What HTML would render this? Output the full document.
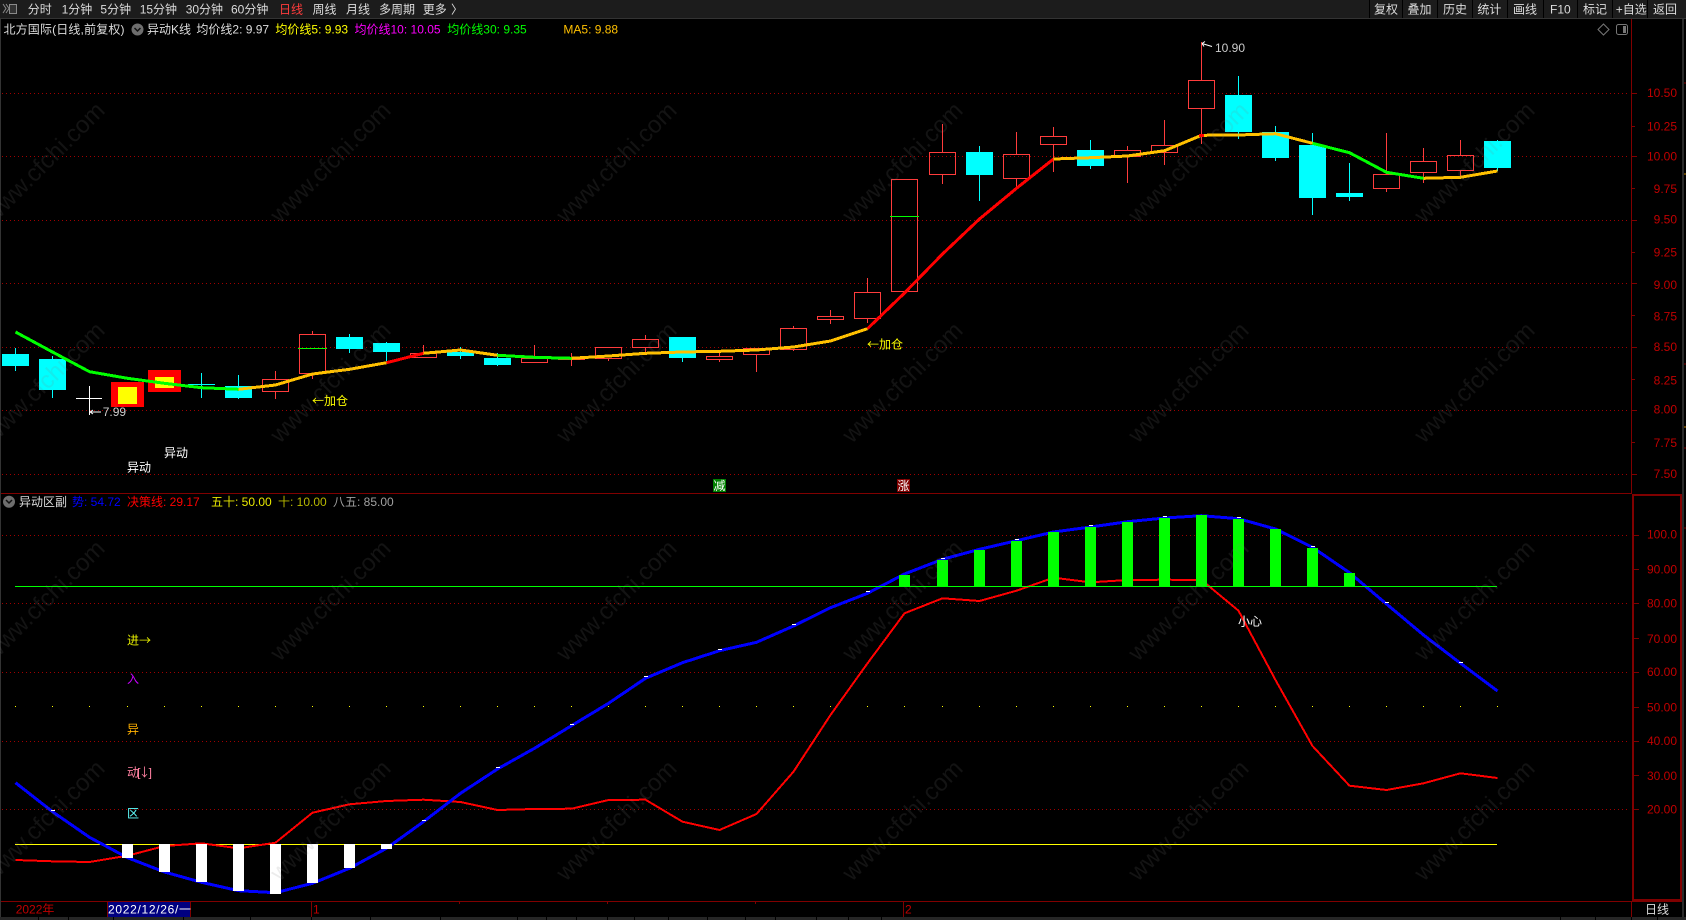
<!DOCTYPE html>
<html lang="zh">
<head>
<meta charset="utf-8">
<title>北方国际</title>
<style>
html,body{margin:0;padding:0;background:#000;width:1686px;height:920px;overflow:hidden}
svg{display:block;position:absolute;left:0;top:0}
text{font-family:"Liberation Sans","Noto Sans CJK SC",sans-serif;font-size:12px;white-space:pre}
.c{shape-rendering:crispEdges}
.t text{fill:#dcdcdc}
.a text{fill:#c00000;text-anchor:end}
.w text{fill:rgba(128,128,128,.15);font-size:24px;text-anchor:middle}
.k{font-family:"Noto Sans CJK SC",sans-serif}
</style>
</head>
<body>
<svg width="1686" height="920" viewBox="0 0 1686 920" xmlns="http://www.w3.org/2000/svg">
<rect width="1686" height="920" fill="#000"/>
<g class="c">
<!-- toolbar -->
<rect width="1686" height="18" fill="#1c1c1c"/>
<rect y="18" width="1686" height="1" fill="#333"/>
<path d="M1369.5 0V18M1402.5 0V18M1437.5 0V18M1472.5 0V18M1507.5 0V18M1543.5 0V18M1577.5 0V18M1612.5 0V18M1647.5 0V18" stroke="#000" fill="none"/>
<!-- borders -->
<rect x="0" y="19" width="1" height="898" fill="#333"/>
<rect x="1682" y="19" width="2" height="901" fill="#2a2a2a"/>
<path d="M1684 83h2M1684 364h2M1684 448h2M1684 528h2" stroke="#800000"/>
<path d="M1684 174h2M1684 427h2" stroke="#c08000"/>
<!-- dotted grid -->
<path d="M2 93.5H1628M2 156.5H1628M2 220.5H1628M2 283.5H1628M2 347.5H1628M2 410.5H1628M2 474.5H1628M2 535.5H1628M2 603.5H1628M2 672.5H1628M2 741.5H1628M2 809.5H1628" stroke="#a00000" stroke-dasharray="1 3" fill="none"/>
<!-- axis -->
<path d="M1631.5 19V494M1631.5 902V917M1 493.5H1632M1 901.5H1682" stroke="#800000" fill="none"/>
<rect x="1632" y="494" width="50" height="2" fill="#800000"/>
<rect x="1632" y="494" width="2" height="407" fill="#800000"/>
<rect x="1680" y="494" width="2" height="407" fill="#800000"/>
<rect x="1632" y="899" width="50" height="2" fill="#800000"/>
<path d="M1632 93.5h5M1632 126.5h3M1632 156.5h5M1632 188.5h3M1632 220.5h5M1632 252.5h3M1632 283.5h5M1632 315.5h3M1632 347.5h5M1632 379.5h3M1632 410.5h5M1632 442.5h3M1632 474.5h5M1634 535.5h5M1634 569.5h5M1634 603.5h5M1634 638.5h5M1634 672.5h5M1634 707.5h5M1634 741.5h5M1634 775.5h5M1634 809.5h5" stroke="#800000" fill="none"/>
<!-- hollow red candles -->
<g fill="none" stroke="#ff3c3c">
<rect x="262.5" y="379.5" width="26" height="12"/><rect x="299.5" y="334.5" width="26" height="39"/><rect x="410.5" y="353.5" width="26" height="4"/><rect x="521.5" y="358.5" width="26" height="4"/><rect x="558.5" y="357.5" width="26" height="2"/><rect x="595.5" y="347.5" width="26" height="11"/><rect x="632.5" y="339.5" width="26" height="8"/><rect x="706.5" y="356.5" width="26" height="3"/><rect x="743.5" y="348.5" width="26" height="6"/><rect x="780.5" y="328.5" width="26" height="21"/><rect x="817.5" y="316.5" width="26" height="3"/><rect x="854.5" y="292.5" width="26" height="26"/><rect x="891.5" y="179.5" width="26" height="112"/><rect x="929.5" y="152.5" width="26" height="22"/><rect x="1003.5" y="154.5" width="26" height="24"/><rect x="1040.5" y="136.5" width="26" height="8"/><rect x="1114.5" y="150.5" width="26" height="6"/><rect x="1151.5" y="145.5" width="26" height="7"/><rect x="1188.5" y="80.5" width="26" height="28"/><rect x="1373.5" y="174.5" width="26" height="14"/><rect x="1410.5" y="161.5" width="26" height="11"/><rect x="1447.5" y="155.5" width="26" height="15"/>
<path d="M275.5 371V379M275.5 392V399M312.5 331V334M312.5 374V379M423.5 345V353M534.5 345V358M571.5 353V357M571.5 360V366M608.5 359V361M645.5 335V339M645.5 348V352M719.5 352V356M719.5 360V362M756.5 355V372M793.5 326V328M793.5 350V351M830.5 310V316M830.5 320V324M867.5 278V292M867.5 319V323M942.5 124V152M942.5 175V184M1016.5 132V154M1016.5 179V189M1053.5 127V136M1053.5 145V172M1127.5 146V150M1127.5 157V183M1164.5 120V145M1164.5 153V165M1201.5 42V80M1201.5 109V144M1386.5 133V174M1386.5 189V192M1423.5 148V161M1423.5 173V183M1460.5 140V155M1460.5 171V176"/>
</g>
<path d="M298 348.5H327M890 216.5H919" stroke="#00ff00"/>
<!-- cyan candles -->
<path d="M15.5 348V371M52.5 356V398M201.5 373V398M188 384.5H215M238.5 375V399M349.5 334V353M386.5 342V361M460.5 347V359M497.5 353V366M682.5 337V362M979.5 146V201M1090.5 140V169M1238.5 76V139M1275.5 126V161M1312.5 133V215M1349.5 163V201M1497.5 140V171" stroke="#00ffff" fill="none"/>
<g fill="#00ffff">
<rect x="2" y="354" width="27" height="12"/><rect x="39" y="359" width="27" height="31"/><rect x="225" y="386" width="27" height="12"/><rect x="336" y="337" width="27" height="12"/><rect x="373" y="343" width="27" height="9"/><rect x="447" y="352" width="27" height="4"/><rect x="484" y="358" width="27" height="7"/><rect x="669" y="337" width="27" height="21"/><rect x="966" y="152" width="27" height="23"/><rect x="1077" y="150" width="27" height="16"/><rect x="1225" y="95" width="27" height="37"/><rect x="1262" y="132" width="27" height="26"/><rect x="1299" y="145" width="27" height="53"/><rect x="1336" y="193" width="27" height="4"/><rect x="1484" y="141" width="27" height="27"/>
</g>
<!-- white crosshair doji -->
<path d="M76 398.5H102M89.5 386V415" stroke="#fff" fill="none"/>
<!-- signal boxes -->
<rect x="111" y="382" width="33" height="25" fill="#f00"/><rect x="118" y="387" width="19" height="17" fill="#ff0"/>
<rect x="148" y="370" width="33" height="22" fill="#f00"/><rect x="155" y="377" width="19" height="11" fill="#ff0"/>
<!-- MA lines -->
<g fill="none" stroke-width="3">
<polyline stroke="#00ff00" points="15.5,332 52.5,352 89.5,371.7 127.5,378.3 164.5,383.3 201.5,387.7 238.5,389.3"/>
<polyline stroke="#ffc000" points="238.5,389.3 275.5,385 312.5,374 349.5,369.3 386.5,362.7"/>
<polyline stroke="#ff0000" points="386.5,362.7 423.5,353.3"/>
<polyline stroke="#ffc000" points="423.5,353.3 460.5,350 497.5,355.3"/>
<polyline stroke="#00ff00" points="497.5,355.3 534.5,357.3 571.5,358.3"/>
<polyline stroke="#ffc000" points="571.5,358.3 608.5,356 645.5,353.3 682.5,352 719.5,351.3 756.5,350 793.5,347 830.5,341 867.5,328.7"/>
<polyline stroke="#ff0000" points="867.5,328.7 904.5,293 942.5,254 979.5,219 1016.5,188.3 1053.5,159"/>
<polyline stroke="#ffc000" points="1053.5,159 1090.5,157.7 1127.5,156 1164.5,150.7 1201.5,135.3 1238.5,135 1275.5,133.7 1312.5,143.3"/>
<polyline stroke="#00ff00" points="1312.5,143.3 1349.5,152.7 1386.5,172.3 1423.5,178.3"/>
<polyline stroke="#ffc000" points="1423.5,178.3 1460.5,177.3 1497.5,171"/>
</g>
<rect x="1199" y="134" width="5" height="3" fill="#f00"/>
<!-- lower panel: reference lines -->
<path d="M15 844.5H1497" stroke="#ffff00" fill="none"/>
<path d="M15 706.5h1M52 706.5h1M89 706.5h1M127 706.5h1M164 706.5h1M201 706.5h1M238 706.5h1M275 706.5h1M312 706.5h1M349 706.5h1M386 706.5h1M423 706.5h1M460 706.5h1M497 706.5h1M534 706.5h1M571 706.5h1M608 706.5h1M645 706.5h1M682 706.5h1M719 706.5h1M756 706.5h1M793 706.5h1M830 706.5h1M867 706.5h1M904 706.5h1M942 706.5h1M979 706.5h1M1016 706.5h1M1053 706.5h1M1090 706.5h1M1127 706.5h1M1164 706.5h1M1201 706.5h1M1238 706.5h1M1275 706.5h1M1312 706.5h1M1349 706.5h1M1386 706.5h1M1423 706.5h1M1460 706.5h1M1497 706.5h1" stroke="#ffff00" fill="none"/>
<!-- red + blue lines -->
<polyline fill="none" stroke="#ff0000" stroke-width="2" points="15.5,860 52.5,861.3 89.5,862 127.5,855.7 164.5,846 201.5,843.3 238.5,848.3 275.5,842.7 312.5,812.7 349.5,804.3 386.5,801 423.5,799.7 460.5,802 497.5,810 534.5,809 571.5,808.7 608.5,800 645.5,799.7 682.5,821.7 719.5,830 756.5,814 793.5,771.7 830.5,715 867.5,663.3 904.5,613.3 942.5,598.3 979.5,601 1016.5,590.7 1053.5,577.7 1090.5,582.3 1127.5,580 1164.5,579.7 1201.5,580 1238.5,610.7 1275.5,680 1312.5,746 1349.5,785.7 1386.5,790 1423.5,783.3 1460.5,773.3 1497.5,778"/>
<polyline fill="none" stroke="#0000ff" stroke-width="3" points="15.5,782.7 52.5,811.7 89.5,837.3 127.5,857.7 164.5,872 201.5,882.3 238.5,890.7 275.5,892.7 312.5,883.3 349.5,868.3 386.5,848.3 423.5,821.7 460.5,793.3 497.5,769 534.5,748.3 571.5,725.7 608.5,703.3 645.5,678.3 682.5,662.7 719.5,650.7 756.5,642.3 793.5,626 830.5,607.7 867.5,593.3 904.5,574 942.5,559.3 979.5,549.3 1016.5,540.7 1053.5,532 1090.5,527 1127.5,521.7 1164.5,518 1201.5,515.7 1238.5,518.7 1275.5,529 1312.5,547.3 1349.5,572.7 1386.5,604 1423.5,635 1460.5,663.3 1497.5,691"/>
<!-- white bars -->
<g fill="#fff">
<rect x="122" y="844" width="11" height="14"/><rect x="159" y="844" width="11" height="28"/><rect x="196" y="844" width="11" height="38"/><rect x="233" y="844" width="11" height="47"/><rect x="270" y="844" width="11" height="50"/><rect x="307" y="844" width="11" height="39"/><rect x="344" y="844" width="11" height="24"/><rect x="381" y="844" width="11" height="5"/>
</g>
<!-- green bars -->
<g fill="#00ff00">
<rect x="899" y="575" width="11" height="11"/><rect x="937" y="560" width="11" height="26"/><rect x="974" y="550" width="11" height="36"/><rect x="1011" y="541" width="11" height="45"/><rect x="1048" y="532" width="11" height="54"/><rect x="1085" y="527" width="11" height="59"/><rect x="1122" y="522" width="11" height="64"/><rect x="1159" y="518" width="11" height="68"/><rect x="1196" y="515" width="11" height="71"/><rect x="1233" y="519" width="11" height="67"/><rect x="1270" y="529" width="11" height="57"/><rect x="1307" y="548" width="11" height="38"/><rect x="1344" y="573" width="11" height="13"/>
</g>
<path d="M15 586.5H1497" stroke="#00ff00" fill="none"/>
<!-- white marks on blue -->
<g fill="#fff">
<rect x="51" y="810" width="4" height="1"/><rect x="422" y="820" width="4" height="1"/><rect x="496" y="767" width="4" height="1"/><rect x="570" y="724" width="4" height="1"/><rect x="644" y="676" width="4" height="1"/><rect x="718" y="649" width="4" height="1"/><rect x="792" y="624" width="4" height="1"/><rect x="866" y="591" width="4" height="1"/><rect x="941" y="558" width="4" height="1"/><rect x="1015" y="539" width="4" height="1"/><rect x="1089" y="525" width="4" height="1"/><rect x="1163" y="516" width="4" height="1"/><rect x="1237" y="517" width="4" height="1"/><rect x="1311" y="546" width="4" height="1"/><rect x="1385" y="602" width="4" height="1"/><rect x="1459" y="662" width="4" height="1"/>
</g>
<!-- bottom bar -->
<rect x="107" y="902" width="84" height="15" fill="#000080"/>
<path d="M107.5 902V917M190.5 902V917M311.5 902V917M903.5 902V917M459.5 901V904M607.5 901V904M755.5 901V904" stroke="#800000" fill="none"/>
<rect y="917" width="1686" height="3" fill="#262626"/>
<path d="M38.5 917V920M68.5 917V920M113.5 917V920M183.5 917V920M250.5 917V920M311.5 917V920M370.5 917V920M440.5 917V920M517.5 917V920M546.5 917V920M576.5 917V920M607.5 917V920M634.5 917V920M668.5 917V920M707.5 917V920M745.5 917V920M775.5 917V920M816.5 917V920M848.5 917V920M881.5 917V920M1560.5 917V920M1595.5 917V920M1631.5 917V920M1657.5 917V920" stroke="#000" fill="none"/>
<!-- flag boxes -->
<rect x="713" y="479" width="13" height="13" fill="#008000"/>
<rect x="897" y="479" width="13" height="13" fill="#800000"/>
</g>

<!-- icons -->
<path d="M3 4l3 4.5-3 4.5M6 4l3 4.5-3 4.5" fill="none" stroke="#8a8a8a"/>
<rect x="9.5" y="4.5" width="7" height="9" fill="#333" stroke="#8a8a8a"/>
<circle cx="137.5" cy="29.5" r="6" fill="#6e6e6e"/>
<path d="M134.5 28l3 3 3-3" fill="none" stroke="#111" stroke-width="1.5"/>
<circle cx="9" cy="501.7" r="6" fill="#6e6e6e"/>
<path d="M6 500l3 3 3-3" fill="none" stroke="#111" stroke-width="1.5"/>
<path d="M1603.5 24l5.5 5.5-5.5 5.5-5.5-5.5z" fill="none" stroke="#777"/>
<rect x="1616.5" y="24.5" width="11" height="10" rx="2" fill="none" stroke="#777"/>
<rect x="1623" y="26" width="3" height="7" fill="#777"/>
<path d="M101 412H90M90 412l3-2M90 412l3 2" fill="none" stroke="#fff"/>
<path d="M1212 46.5L1202 43.5M1202 43.5l3-2M1202 43.5l2 3" fill="none" stroke="#fff"/>

<!-- toolbar text -->
<g class="t">
<text x="27.7" y="13.5">分时</text>
<text x="61.6" y="13.5">1分钟</text>
<text x="100.4" y="13.5">5分钟</text>
<text x="139.7" y="13.5">15分钟</text>
<text x="185.7" y="13.5">30分钟</text>
<text x="231" y="13.5">60分钟</text>
<text x="279" y="13.5" style="fill:#ff3c3c">日线</text>
<text x="312.5" y="13.5">周线</text>
<text x="346" y="13.5">月线</text>
<text x="379" y="13.5">多周期</text>
<text x="422.8" y="13.5">更多</text>
<text x="451" y="13.5">〉</text>
<text x="1374" y="13.5">复权</text>
<text x="1407.5" y="13.5">叠加</text>
<text x="1443" y="13.5">历史</text>
<text x="1477.4" y="13.5">统计</text>
<text x="1513" y="13.5">画线</text>
<text x="1550" y="13.5">F10</text>
<text x="1583" y="13.5">标记</text>
<text x="1615.7" y="13.5">+自选</text>
<text x="1653" y="13.5">返回</text>
<text x="3.5" y="33.5" textLength="121">北方国际(日线,前复权)</text>
<text x="147" y="33.5">异动K线</text>
<text x="196.4" y="33.5">均价线2: 9.97</text>
<text x="275.4" y="33.5" style="fill:#ffff00">均价线5: 9.93</text>
<text x="354.5" y="33.5" style="fill:#ff00ff">均价线10: 10.05</text>
<text x="447.3" y="33.5" style="fill:#00ff00">均价线30: 9.35</text>
<text x="563.4" y="33.5" style="fill:#ffc000">MA5: 9.88</text>
<text x="19" y="506">异动区副</text>
<text x="72" y="506" style="fill:#0000ff">势: 54.72</text>
<text x="127" y="506" style="fill:#ff0000">决策线: 29.17</text>
<text x="211" y="506" style="fill:#e8e800">五十: 50.00</text>
<text x="278" y="506" style="fill:#b8b800">十: 10.00</text>
<text x="333" y="506" style="fill:#a0a0a0">八五: 85.00</text>
<text x="1645" y="913.5">日线</text>
<text x="108" y="913.5" style="fill:#fff" textLength="83">2022/12/26/一</text>
<text x="1215" y="52" style="fill:#ccc">10.90</text>
<text x="102.7" y="416" style="fill:#ccc">7.99</text>
<text x="164" y="457" style="fill:#fff">异动</text>
<text x="127" y="471.5" style="fill:#fff">异动</text>
<text x="312" y="405" style="fill:#ffff00"><tspan class="k">←</tspan>加仓</text>
<text x="867" y="348.5" style="fill:#ffff00"><tspan class="k">←</tspan>加仓</text>
<text x="713.5" y="490" style="fill:#fff">减</text>
<text x="897.5" y="490" style="fill:#fff">涨</text>
<text x="127" y="644.5" style="fill:#e8f000">进<tspan class="k">→</tspan></text>
<text x="127" y="683" style="fill:#c800ff">入</text>
<text x="127" y="733.5" style="fill:#ffb000">异</text>
<text x="127" y="776.5" style="fill:#ff80a0" textLength="25">动[<tspan class="k">↓</tspan>]</text>
<text x="127" y="817.5" style="fill:#60ffff">区</text>
<text x="1238" y="625.5" style="fill:#fff">小心</text>
<text x="15.7" y="913.5" style="fill:#c00000">2022年</text>
<text x="313" y="913.5" style="fill:#c00000">1</text>
<text x="905" y="913.5" style="fill:#c00000">2</text>
</g>

<!-- axis labels -->
<g class="a">
<text x="1677" y="97">10.50</text>
<text x="1677" y="130.5">10.25</text>
<text x="1677" y="160.5">10.00</text>
<text x="1677" y="193">9.75</text>
<text x="1677" y="223.5">9.50</text>
<text x="1677" y="256.5">9.25</text>
<text x="1677" y="289">9.00</text>
<text x="1677" y="320.5">8.75</text>
<text x="1677" y="351">8.50</text>
<text x="1677" y="384.5">8.25</text>
<text x="1677" y="413.5">8.00</text>
<text x="1677" y="447">7.75</text>
<text x="1677" y="478">7.50</text>
<text x="1677" y="538.5">100.0</text>
<text x="1677" y="573.5">90.00</text>
<text x="1677" y="607.5">80.00</text>
<text x="1677" y="643">70.00</text>
<text x="1677" y="676">60.00</text>
<text x="1677" y="711.5">50.00</text>
<text x="1677" y="745">40.00</text>
<text x="1677" y="780">30.00</text>
<text x="1677" y="813.5">20.00</text>
</g>

<!-- watermarks -->
<g class="w">
<text transform="translate(50,168) rotate(-45)">www.cfchi.com</text>
<text transform="translate(336,168) rotate(-45)">www.cfchi.com</text>
<text transform="translate(622,168) rotate(-45)">www.cfchi.com</text>
<text transform="translate(908,168) rotate(-45)">www.cfchi.com</text>
<text transform="translate(1194,168) rotate(-45)">www.cfchi.com</text>
<text transform="translate(1480,168) rotate(-45)">www.cfchi.com</text>
<text transform="translate(50,388) rotate(-45)">www.cfchi.com</text>
<text transform="translate(336,388) rotate(-45)">www.cfchi.com</text>
<text transform="translate(622,388) rotate(-45)">www.cfchi.com</text>
<text transform="translate(908,388) rotate(-45)">www.cfchi.com</text>
<text transform="translate(1194,388) rotate(-45)">www.cfchi.com</text>
<text transform="translate(1480,388) rotate(-45)">www.cfchi.com</text>
<text transform="translate(50,606) rotate(-45)">www.cfchi.com</text>
<text transform="translate(336,606) rotate(-45)">www.cfchi.com</text>
<text transform="translate(622,606) rotate(-45)">www.cfchi.com</text>
<text transform="translate(908,606) rotate(-45)">www.cfchi.com</text>
<text transform="translate(1194,606) rotate(-45)">www.cfchi.com</text>
<text transform="translate(1480,606) rotate(-45)">www.cfchi.com</text>
<text transform="translate(50,826) rotate(-45)">www.cfchi.com</text>
<text transform="translate(336,826) rotate(-45)">www.cfchi.com</text>
<text transform="translate(622,826) rotate(-45)">www.cfchi.com</text>
<text transform="translate(908,826) rotate(-45)">www.cfchi.com</text>
<text transform="translate(1194,826) rotate(-45)">www.cfchi.com</text>
<text transform="translate(1480,826) rotate(-45)">www.cfchi.com</text>
</g>
</svg>
</body>
</html>
